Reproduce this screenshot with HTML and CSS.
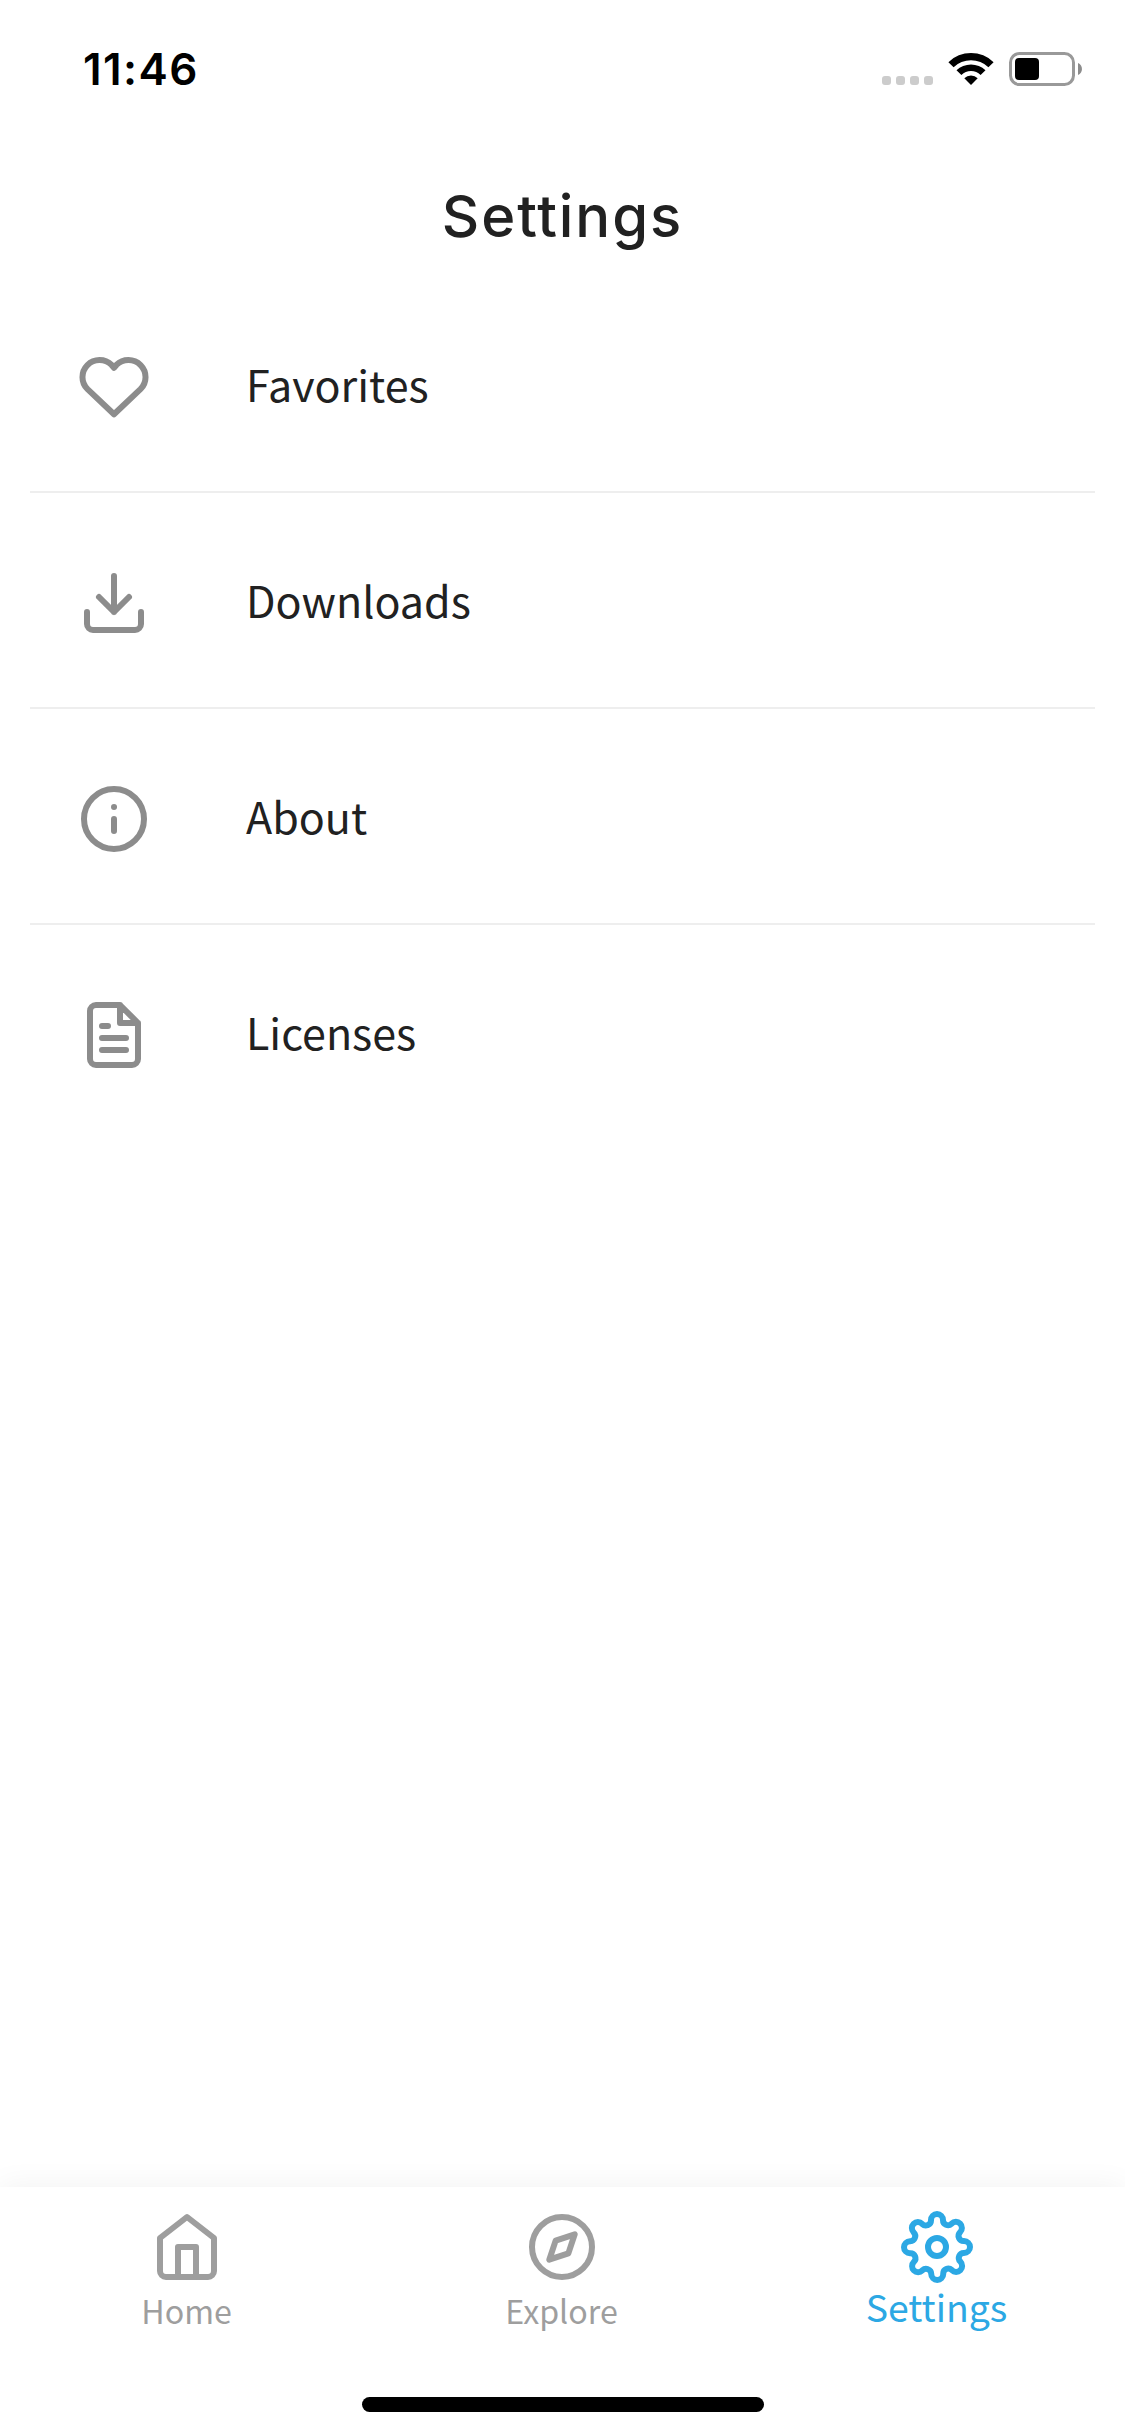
FILE: index.html
```
<!DOCTYPE html>
<html lang="en">
<head>
<meta charset="utf-8">
<title>Settings</title>
<link rel="stylesheet" href="styles.css">
</head>
<body>
<div class="screen">
  <header class="status">
    <span class="time">11:46</span>
    <div class="indicators">
      <div class="signal"><i></i><i></i><i></i><i></i></div>
      <svg class="wifi" viewBox="0 0 46 34" fill="#000">
        <path d="M0.4 10.2A32.2 32.2 0 0 1 45.6 10.2L40.4 15.2A25.1 25.1 0 0 0 5.6 15.2Z"/>
        <path d="M8.5 18.3A20.8 20.8 0 0 1 37.5 18.3L32.6 23A13.8 13.8 0 0 0 13.4 23Z"/>
        <path d="M16.3 26.2A9.6 9.6 0 0 1 29.7 26.2L23 33Z"/>
      </svg>
      <svg class="battery" viewBox="0 0 74 34">
        <rect x="1.5" y="1.5" width="63" height="31" rx="9" fill="none" stroke="#999" stroke-width="3"/>
        <rect x="6" y="6" width="24" height="22" rx="4" fill="#000"/>
        <path d="M69 11C74.3 13 74.3 21 69 23Z" fill="#8c8c8c"/>
      </svg>
    </div>
  </header>
  <h1 class="title">Settings</h1>
  <ul class="list">
    <li class="row">
      <svg class="icon" viewBox="0 0 24 24"><path d="M12 21.1L3.17 12.73A5.69 5.69 0 0 1 11.2 4.65L12 5.6L12.8 4.65A5.69 5.69 0 0 1 20.83 12.73Z"/></svg>
      <span class="label">Favorites</span>
    </li>
    <li class="row">
      <svg class="icon" viewBox="0 0 24 24"><path d="M21 15v4a2 2 0 0 1-2 2H5a2 2 0 0 1-2-2v-4M7 10l5 5 5-5M12 15V3"/></svg>
      <span class="label">Downloads</span>
    </li>
    <li class="row">
      <svg class="icon" viewBox="0 0 24 24"><circle cx="12" cy="12" r="10"/><path d="M12 16v-4M12 8h.01"/></svg>
      <span class="label">About</span>
    </li>
    <li class="row">
      <svg class="icon" viewBox="0 0 24 24"><path d="M14 2H6a2 2 0 0 0-2 2v16a2 2 0 0 0 2 2h12a2 2 0 0 0 2-2V8zM14 2v6h6M16 13H8M16 17H8M10 9H8"/></svg>
      <span class="label">Licenses</span>
    </li>
  </ul>
  <nav class="tabs">
    <a class="tab">
      <svg class="icon" viewBox="0 0 24 24"><path d="M3 9l9-7 9 7v11a2 2 0 0 1-2 2H5a2 2 0 0 1-2-2zM9 22V12h6v10"/></svg>
      <span class="tab-label">Home</span>
    </a>
    <a class="tab">
      <svg class="icon" viewBox="0 0 24 24"><circle cx="12" cy="12" r="10"/><path d="M16.24 7.76l-2.12 6.36-6.36 2.12 2.12-6.36z"/></svg>
      <span class="tab-label">Explore</span>
    </a>
    <a class="tab active">
      <svg class="icon" viewBox="0 0 24 24"><circle cx="12" cy="12" r="3"/><path d="M19.4 15a1.65 1.65 0 0 0 .33 1.82l.06.06a2 2 0 0 1 0 2.83 2 2 0 0 1-2.83 0l-.06-.06a1.65 1.65 0 0 0-1.82-.33 1.65 1.65 0 0 0-1 1.51V21a2 2 0 0 1-2 2 2 2 0 0 1-2-2v-.09A1.65 1.65 0 0 0 9 19.4a1.65 1.65 0 0 0-1.82.33l-.06.06a2 2 0 0 1-2.83 0 2 2 0 0 1 0-2.83l.06-.06a1.65 1.65 0 0 0 .33-1.82 1.65 1.65 0 0 0-1.51-1H3a2 2 0 0 1-2-2 2 2 0 0 1 2-2h.09A1.65 1.65 0 0 0 4.6 9a1.65 1.65 0 0 0-.33-1.82l-.06-.06a2 2 0 0 1 0-2.83 2 2 0 0 1 2.83 0l.06.06a1.65 1.65 0 0 0 1.82.33H9a1.65 1.65 0 0 0 1-1.51V3a2 2 0 0 1 2-2 2 2 0 0 1 2 2v.09a1.65 1.65 0 0 0 1 1.51 1.65 1.65 0 0 0 1.82-.33l.06-.06a2 2 0 0 1 2.83 0 2 2 0 0 1 0 2.83l-.06.06a1.65 1.65 0 0 0-.33 1.82V9a1.65 1.65 0 0 0 1.51 1H21a2 2 0 0 1 2 2 2 2 0 0 1-2 2h-.09a1.65 1.65 0 0 0-1.51 1z"/></svg>
      <span class="tab-label">Settings</span>
    </a>
  </nav>
  <footer class="home-area"><div class="home-indicator"></div></footer>
</div>
</body>
</html>
```
FILE: styles.css
```
* { box-sizing: border-box; }
body { margin: 0; background: #fff; }
.screen {
  width: 1125px;
  height: 2436px;
  display: flex;
  flex-direction: column;
  overflow: hidden;
  color: #212121;
  font-family: "Noto Sans CJK SC", "Noto Sans", sans-serif;
}
.status {
  height: 132px;
  padding: 42px 43px 0 83px;
  display: flex;
  justify-content: space-between;
  align-items: flex-start;
}
.time {
  font: 600 44px/54px Inter, sans-serif;
  letter-spacing: 1.4px;
  color: #000;
}
.indicators {
  display: flex;
  align-items: flex-end;
  padding-top: 10px;
}
.signal { display: flex; gap: 5px; margin-right: 15px; padding-bottom: 1px; }
.signal i { width: 9px; height: 9px; border-radius: 3px; background: #ccc; }
.wifi { width: 46px; height: 34px; margin-right: 15px; }
.battery { width: 74px; height: 34px; margin-right: -1px; }
.title {
  margin: 49px 0 0;
  font: 500 58px/70px Inter, sans-serif;
  letter-spacing: 1.9px;
  text-align: center;
}
.list { list-style: none; margin: 26px 30px 0; padding: 0; flex: 1; }
.row {
  height: 216px;
  padding: 74px 48px 0;
  display: flex;
  align-items: flex-start;
  gap: 96px;
  border-bottom: 2px solid #eee;
}
.row:last-child { border-bottom: 0; }
.icon {
  width: 72px;
  height: 72px;
  flex: none;
  fill: none;
  stroke: #8c8c8c;
  stroke-width: 2;
  stroke-linecap: round;
  stroke-linejoin: round;
}
.label { margin-top: 1px; font-size: 43px; line-height: 62px; }
.tabs {
  height: 147px;
  padding-top: 24px;
  display: grid;
  grid-template-columns: repeat(3, 1fr);
  background: #fff;
  box-shadow: 0 0 30px rgba(0, 0, 0, .06);
}
.tab {
  padding-right: 1px;
  display: flex;
  flex-direction: column;
  align-items: center;
  color: #9e9e9e;
}
.tab .icon { stroke: currentColor; }
.tab-label { margin-top: 4px; padding-right: 1px; font-size: 32.2px; line-height: 46px; }
.active { color: #2ca8e4; }
.active .tab-label { margin-top: -4px; font-size: 37.4px; line-height: 55px; }
.home-area {
  height: 102px;
  padding-top: 63px;
  background: #fff;
  position: relative;
}
.home-indicator {
  width: 402px;
  height: 15px;
  margin: 0 auto;
  border-radius: 8px;
  background: #000;
}
```
